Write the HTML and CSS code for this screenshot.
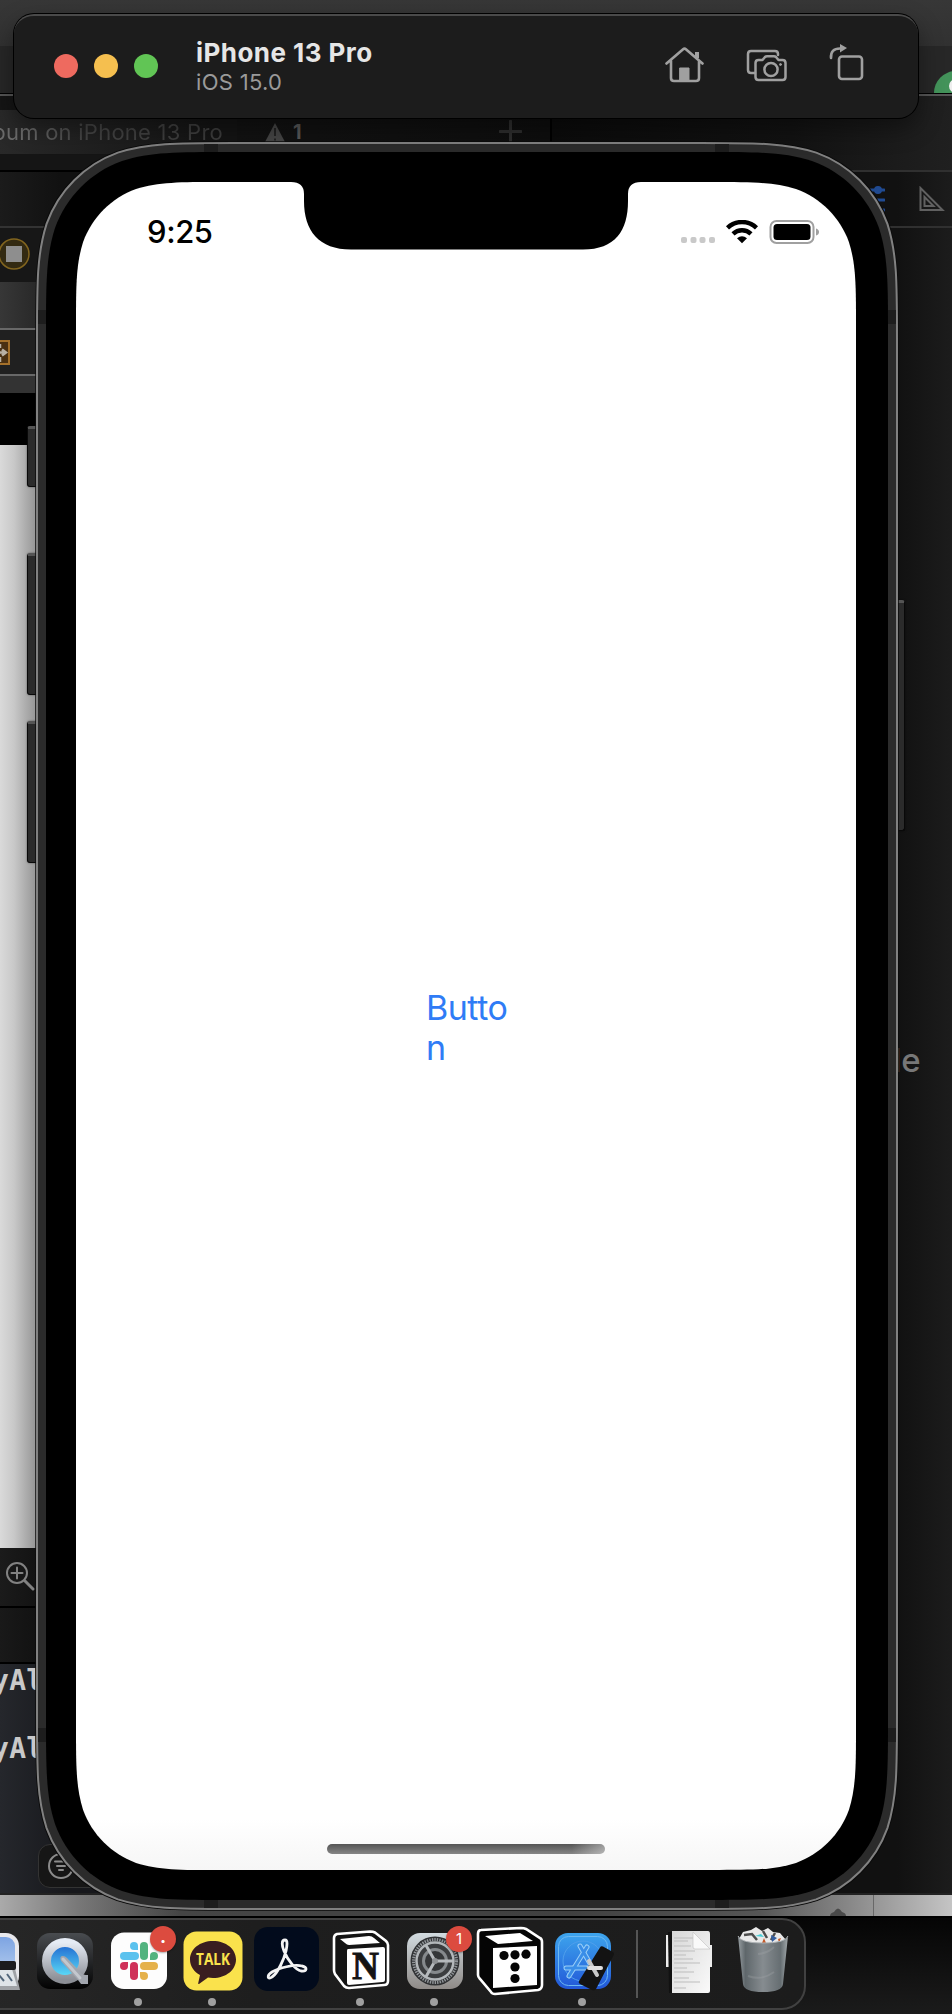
FILE: index.html
```
<!DOCTYPE html>
<html lang="en">
<head>
<meta charset="utf-8">
<title>Simulator</title>
<link rel="stylesheet" href="styles.css">
</head>
<body>
<main class="desktop">
  <section class="ide">
    <div class="browser-bar"></div>
    <div class="browser-tabs">
      <svg class="favicon" width="18" height="23" viewBox="0 0 18 23"><circle cx="22" cy="23" r="22" fill="#43935a"/><circle cx="22" cy="16" r="7" fill="#eee"/></svg>
    </div>
    <div class="ide-body">
      <div class="editor">
        <div class="activity">
          <div class="activity-status"><span>bum on iPhone 13 Pro</span></div>
          <div class="warning">
            <svg width="20" height="19" viewBox="0 0 20 19"><path d="M10 0 20 19H0z" fill="#454545"/><path d="M10 5v8M10 15.500v2" stroke="#222" stroke-width="2"/></svg>
            <b>1</b>
          </div>
          <svg class="plus" width="23" height="23" viewBox="0 0 23 23"><path d="M11.500 1v21M1 11.500h21" stroke="#2e2e2e" stroke-width="3" stroke-linecap="round"/></svg>
        </div>
        <div class="tabs-row"></div>
        <div class="jump-row"></div>
        <div class="stop-row">
          <svg width="36" height="54" viewBox="0 0 36 54"><circle cx="14" cy="26" r="15" fill="#332a12" stroke="#82651f" stroke-width="1.500"/><rect x="6" y="18" width="16" height="16" fill="#8e8e8e"/></svg>
        </div>
        <div class="path-row"></div>
        <div class="layout-row">
          <svg width="36" height="44" viewBox="0 0 36 44"><rect x="-16" y="11" width="25" height="23" fill="#4a3012" stroke="#a4702a" stroke-width="2"/><path d="M-2 22.500H5M2 19.500l4 3-4 3M0 14v4M0 27v5" stroke="#b9b1a5" stroke-width="2.500"/></svg>
        </div>
        <div class="ruler-row"></div>
        <div class="black-row"></div>
        <div class="canvas"></div>
        <div class="zoom-row">
          <svg width="36" height="56" viewBox="0 0 36 56" fill="none" stroke="#828282" stroke-width="2" stroke-linecap="round"><circle cx="17" cy="25" r="10"/><path d="M11.500 25h11M17 19.500v11"/><path d="m25 33 8 8" stroke-width="3"/></svg>
        </div>
        <div class="debug-row"></div>
        <div class="console">
          <div class="log">yAlbum</div>
          <div class="log">yAlbum</div>
          <div class="filter">
            <svg width="26" height="26" viewBox="0 0 26 26" fill="none" stroke="#8b8b8b" stroke-width="2" stroke-linecap="round"><circle cx="13" cy="13" r="12"/><path d="M7 8.500h12M9 13h8M11 17h4"/></svg>
          </div>
        </div>
      </div>
      <aside class="inspector">
        <div class="inspector-top"></div>
        <div class="inspector-tabs">
          <svg width="27" height="26" viewBox="0 0 27 26" stroke="#204a91" stroke-width="3" stroke-linecap="round"><path d="M1 4h25M1 14h25M1 24h25"/><circle cx="20" cy="4" r="3" fill="#204a91" stroke-width="2"/></svg>
          <svg width="26" height="26" viewBox="0 0 26 26" fill="none" stroke="#606060" stroke-width="2"><path d="M1.500 2v22h22z"/><path d="M5.500 11v9h9z"/></svg>
        </div>
        <div class="inspector-body">le</div>
      </aside>
    </div>
    <div class="page-strip">
      <svg width="20" height="8" viewBox="0 0 20 8"><path d="M2 8q0-3 4-4 4-7 8 0 4 1 4 4z" fill="#494949"/></svg>
      <i></i>
    </div>
    <div class="wallpaper"></div>
  </section>

  <nav class="dock">
    <svg class="app" viewBox="0 0 74 92">
      <defs>
        <linearGradient id="sky" x2="0" y2="1"><stop stop-color="#7da4e2"/><stop offset="1" stop-color="#c3d8f2"/></linearGradient>
        <linearGradient id="qtb" x2="0" y2="1"><stop stop-color="#494c50"/><stop offset="1" stop-color="#020202"/></linearGradient>
        <linearGradient id="qtr" x2="0" y2="1"><stop stop-color="#e6ecf5"/><stop offset="1" stop-color="#8c8f96"/></linearGradient>
        <linearGradient id="qti" x2="0" y2="1"><stop stop-color="#1c62ce"/><stop offset="1" stop-color="#62e7fb"/></linearGradient>
        <linearGradient id="set" x2="0" y2="1"><stop stop-color="#d2dbe0"/><stop offset="1" stop-color="#8f8b88"/></linearGradient>
        <linearGradient id="sim" x2="0" y2="1"><stop stop-color="#3da5ed"/><stop offset="1" stop-color="#2257d8"/></linearGradient>
        <linearGradient id="bin"><stop stop-color="#969da1"/><stop offset=".15" stop-color="#5f676b"/><stop offset=".5" stop-color="#868c90"/><stop offset=".85" stop-color="#666e72"/><stop offset="1" stop-color="#a2a8ab"/></linearGradient>
        <linearGradient id="pap" x2="1" y2="1"><stop stop-color="#d7d7d7"/><stop offset="1" stop-color="#fafafa"/></linearGradient>
      </defs>
      <rect x="9" y="15" width="56" height="56" rx="13" fill="#e8e8ec"/><rect x="13" y="19" width="48" height="48" rx="9" fill="url(#sky)"/>
      <path d="M42 46h18l6 26H38z" fill="#9fa2a6"/><path d="M44 51h14l5 17H41z" fill="#dfe4e8"/><rect x="40" y="43" width="22" height="9" rx="2" fill="#1b1b1d"/><path d="M45 57l5 6m3-7 5 7" stroke="#52667a" stroke-width="2"/>
    </svg>
    <svg class="app" viewBox="0 0 74 92"><rect x="9" y="15" width="56" height="56" rx="13" fill="url(#qtb)"/><circle cx="37" cy="43" r="18.500" fill="url(#qti)" stroke="url(#qtr)" stroke-width="9"/><path d="M33 43q-2-5 2-5 2 0 4 2l14 15q2 2 7 2v9h-7l-3-4z" fill="#a2a6ae"/><path d="M35 41 52 60" stroke="#c3c7cd" stroke-width="3" stroke-linecap="round"/></svg>
    <div class="app running">
      <svg viewBox="0 0 74 92"><rect x="9" y="14.500" width="56" height="56.500" rx="13" fill="#fdfdfd"/>
        <g stroke-width="8" stroke-linecap="round"><path d="M22 38h11" stroke="#5bc2ee"/><path d="M42 28v10" stroke="#52b37f"/><path d="M32 48v10" stroke="#cf3159"/><path d="M42 48h10" stroke="#e5b14b"/></g>
        <path d="M36 32h-4a4 4 0 1 1 4-4z" fill="#5bc2ee"/><path d="M48 42v-4a4 4 0 1 1 4 4z" fill="#52b37f"/><path d="M26 44v4a4 4 0 1 1-4-4z" fill="#cf3159"/><path d="M38 54h4a4 4 0 1 1-4 4z" fill="#e5b14b"/>
      </svg>
      <span class="badge badge-dot">•</span>
    </div>
    <div class="app running">
      <svg viewBox="0 0 74 92"><rect x="7.500" y="13.500" width="59" height="59" rx="13" fill="#fae24c"/><path d="M37 23c13 0 23 8 23 18.500S50 60 37 60q-3 0-5-.4L23 66q-1 .4-.8-.7L24 57c-6-3-10-9-10-15.500C14 31 24 23 37 23z" fill="#3a1d20"/><text x="20" y="47" textLength="34" lengthAdjust="spacingAndGlyphs" class="talk">TALK</text></svg>
    </div>
    <svg class="app" viewBox="0 0 74 92"><rect x="4" y="9" width="65" height="64" rx="14" fill="#020b1c"/><path d="M35 22c-4 0-3 6-1 11 4 10 12 19 17 20 6 1 7-4 1-5-8-2-23 2-30 6-6 4-4 8 0 5 6-4 12-18 14-26 1-5 2-11-1-11z" fill="none" stroke="#f4f4f4" stroke-width="2.800"/></svg>
    <div class="app running">
      <svg viewBox="0 0 74 92"><path d="M13 16 46 13.500q3 0 5 1L62 23q2 2 2 4v36q0 4-4 4l-35 3q-3 0-5-2L11 56q-1-2-1-4V20q0-3 3-4z" fill="#141414" stroke="#fff" stroke-width="2.600"/><path d="m16 21 29-3q3 0 5 2l6 5-31 2q-2 0-4-2z" fill="#fff"/><path d="m24 31 35-2q2 0 2 2v31q0 2-2 2l-34 3q-2 0-2-2V33q0-2 1-2z" fill="#fff"/><text x="28" y="60.500" textLength="27" lengthAdjust="spacingAndGlyphs" class="notion">N</text></svg>
    </div>
    <div class="app running">
      <svg viewBox="0 0 74 92"><rect x="9" y="15" width="56" height="56" rx="13" fill="url(#set)"/><circle cx="37" cy="43" r="24.500" fill="#303234"/><circle cx="37" cy="43" r="21.500" fill="none" stroke="#92969a" stroke-width="3" stroke-dasharray="1.400 1.100"/><circle cx="37" cy="43" r="18.500" fill="#3b3d3f" stroke="#b3b7ba" stroke-width="2.500"/><circle cx="37" cy="43" r="11.500" fill="#343638" stroke="#85898c" stroke-width="3"/><path d="M37 43h19M37 43 27.500 26.500M37 43 27.500 59.500" stroke="#b5b9bc" stroke-width="3"/><circle cx="37" cy="43" r="3" fill="#8e9194"/></svg>
      <span class="badge">1</span>
    </div>
    <svg class="app dice" viewBox="0 0 74 92"><path d="M8 12 48 10q3 0 5 1L67 20q2 1 2 4v43q0 4-4 5l-43 4q-3 0-4-2L7 61q-2-2-2-4V16q0-4 3-4z" fill="#050505" stroke="#fff" stroke-width="2.600"/><path d="m12 18 35-3 13 8-35 3z" fill="#fff"/><path d="m20 30 44-2v39l-44 3z" fill="#fff"/><g fill="#050505"><circle cx="31" cy="37.500" r="4.600"/><circle cx="42" cy="36.800" r="4.600"/><circle cx="53" cy="36.200" r="4.600"/><circle cx="42" cy="49" r="4.600"/><circle cx="42" cy="60.500" r="4.600"/></g></svg>
    <div class="app running">
      <svg viewBox="0 0 74 92"><rect x="9" y="15" width="56" height="56" rx="13" fill="url(#sim)"/><rect x="12.500" y="18.500" width="49" height="49" rx="10" fill="none" stroke="#6db9f1"/><circle cx="37" cy="43" r="20" fill="none" stroke="#4f9fec"/><g fill="none" stroke="#9cd0f8" stroke-linecap="round"><path d="m41 29-18 29" stroke-width="5"/><path d="m34 28 16 28" stroke-width="5"/><path d="M20 50h34" stroke-width="5"/></g><g fill="none" stroke="#3a8ee8" stroke-width="3" stroke-linecap="round"><path d="m41 29-18 29M34 28l16 28M20 50h20"/></g><path d="M54 29.500q1-2 3-1l9 5q3 1 1.500 4L50 71q-1 2-4 1l-12-6q-2-1-1-3z" fill="#131313"/><path d="m43 43 8 14" stroke="#c8c8c8" stroke-width="4" stroke-linecap="round"/><path d="M43 50h12" stroke="#e0e0e0" stroke-width="4" stroke-linecap="round"/></svg>
    </div>
    <i class="divider"></i>
    <svg class="app" viewBox="0 0 74 92"><path d="M14 17h8v32h-8zM54 27h6v22h-6z" fill="#ededed"/><path d="M16 14h8v61h-7z" fill="#111"/><path d="M20 13h36q2 0 2 3v57q0 2-2 2H20z" fill="url(#pap)"/><path d="M22 20h20M22 23h14M22 28h17M22 33h21M22 37h12M22 41h19M22 45h26M22 50h13M22 54h20M22 60h15M22 64h26M22 70h12" stroke="#bdbdbd"/><path d="M41 14 58 31H43q-2 0-2-2z" fill="#f9f9f9" stroke="#c6c6c6" stroke-width=".7"/></svg>
    <svg class="app" viewBox="0 0 74 92"><path d="m13 21 4-7 8-2 5-3 6 4 6-3 5 4 7 1 6 7-22 8z" fill="#e9e9e9"/><path d="m18 17 8-1 5 6m6-9 4 7m8-5-4 7" fill="none" stroke="#4d4d4d" stroke-width="2.500"/><path d="m29 18 6-2 3 3z" fill="#48cdd6"/><path d="m45 17 6 3-5 4z" fill="#345e9f"/><path d="m38 20 2 5h-4zM52 21l3-1-2 5z" fill="#c55a29"/><path d="M12 18q2 7 25 7t25-7l-5 48q-1 8-20 8t-20-8z" fill="url(#bin)"/><path d="M12 18q2 7 25 7t25-7" fill="none" stroke="#adb2b5" stroke-width="1"/><path d="M32 36q10-1 16-7M22 58q14 5 26-4" fill="none" stroke="#a4a9ac" stroke-width="2" opacity=".3"/></svg>
  </nav>

  <section class="phone">
    <i class="key key-mute"></i><i class="key key-up"></i><i class="key key-down"></i><i class="key key-power"></i>
    <svg class="shell" viewBox="0 0 862 1768">
      <defs><linearGradient id="page" x2="0" y2="1"><stop offset=".97" stop-color="#fff"/><stop offset="1" stop-color="#f6f6f6"/></linearGradient></defs>
      <path fill="#2b2b2b" stroke="#0b0b0b" stroke-width="1.500" d="M0 196C0 139 0 111 9.600 81C21.600 47.700 47.700 21.600 81 9.600C111 0 139 0 196 0H666C723 0 751 0 781 9.600C814.300 21.600 840.400 47.700 852.400 81C862 111 862 139 862 196V1572C862 1629 862 1657 852.400 1687C840.400 1720.300 814.300 1746.400 781 1758.400C751 1768 723 1768 666 1768H196C139 1768 111 1768 81 1758.400C47.700 1746.400 21.600 1720.300 9.600 1687C0 1657 0 1629 0 1572Z"/>
      <path fill="none" stroke="#818181" stroke-width="2" transform="translate(1 1) scale(.99768 .99887)" d="M0 196C0 139 0 111 9.600 81C21.600 47.700 47.700 21.600 81 9.600C111 0 139 0 196 0H666C723 0 751 0 781 9.600C814.300 21.600 840.400 47.700 852.400 81C862 111 862 139 862 196V1572C862 1629 862 1657 852.400 1687C840.400 1720.300 814.300 1746.400 781 1758.400C751 1768 723 1768 666 1768H196C139 1768 111 1768 81 1758.400C47.700 1746.400 21.600 1720.300 9.600 1687C0 1657 0 1629 0 1572Z"/>
      <path fill="#1d1d1d" d="M168 2h14v8h-14zM679 2h14v8h-14zM168 1758h14v8h-14zM679 1758h14v8h-14zM2 168h8v14H2zM852 168h8v14h-8zM2 1586h8v14H2zM852 1586h8v14h-8z"/>
      <path fill="#000" transform="translate(10 10)" d="M0 183C0 131 0 104 9 76C20 45 45 20 76 9C104 0 131 0 183 0H659C711 0 738 0 766 9C797 20 822 45 833 76C842 104 842 131 842 183V1565C842 1617 842 1644 833 1672C822 1703 797 1728 766 1739C738 1748 711 1748 659 1748H183C131 1748 104 1748 76 1739C45 1728 20 1703 9 1672C0 1644 0 1617 0 1565Z"/>
      <path fill="url(#page)" transform="translate(40 40)" d="M0 145C0 103.400 0 82.500 7.100 60C16.100 35.400 35.400 16.100 60 7.100C82.500 0 103.400 0 145 0H635C676.600 0 697.500 0 720 7.100C744.600 16.100 763.900 35.400 772.900 60C780 82.500 780 103.400 780 145V1543C780 1584.600 780 1605.500 772.900 1628C763.900 1652.600 744.600 1671.900 720 1680.900C697.500 1688 676.600 1688 635 1688H145C103.400 1688 82.500 1688 60 1680.900C35.400 1671.900 16.100 1652.600 7.100 1628C0 1605.500 0 1584.600 0 1543Z"/>
      <path fill="#000" transform="translate(40 40)" d="M215 0Q228 0 228 12V19C228 49 243 67.500 275 67.500H507C539 67.500 552 49 552 19V12Q552 0 565 0V-2H215Z"/>
    </svg>
    <div class="screen">
      <header class="status">
        <time>9:25</time>
        <svg width="144" height="26" viewBox="0 0 144 26"><g fill="#c9c9c9"><rect x="2" y="17" width="6" height="6" rx="2"/><rect x="11.500" y="17" width="6" height="6" rx="2"/><rect x="20.500" y="17" width="6" height="6" rx="2"/><rect x="30" y="17" width="6" height="6" rx="2"/></g>
          <g fill="none" stroke="#000" stroke-width="4.400"><path d="M48.500 7.800a21 21 0 0 1 29 0"/><path d="M54 13.800a13 13 0 0 1 18 0"/></g><path d="m58 18.300q5-4 10 0L63 23.300z"/>
          <rect x="91.500" y="1" width="43" height="22" rx="6" fill="none" stroke="#a0a0a0" stroke-width="2"/><rect x="94.500" y="4" width="37" height="16" rx="3.500"/><path d="M137 8.500q3 1 3 3.500t-3 3.500z" fill="#a0a0a0"/></svg>
      </header>
      <button class="app-button">Butto<br>n</button>
      <i class="home-bar"></i>
    </div>
  </section>

  <header class="sim-bar">
    <div class="lights"><i class="red"></i><i class="amber"></i><i class="green"></i></div>
    <div class="device"><h1>iPhone 13 Pro</h1><p>iOS 15.0</p></div>
    <div class="tools">
      <svg width="40" height="40" viewBox="0 0 40 40" fill="none" stroke="#a0a0a0" stroke-width="2.600" stroke-linecap="round" stroke-linejoin="round"><path d="m1.500 19.500 16.600-14.300q1.400-1.200 2.800 0L37.500 19.500M6 17v17q0 3 3 3h22q3 0 3-3V17"/><path d="M32 14V8" stroke-width="4" stroke-linecap="butt"/><path d="M15 24h9v12h-9z" fill="#a0a0a0" stroke-width="1"/></svg>
      <svg width="42" height="40" viewBox="0 0 42 40" fill="none" stroke="#a0a0a0" stroke-width="2.500" stroke-linecap="round" stroke-linejoin="round"><path d="M9 29H5q-3 0-3-3V10q0-3 3-3h24q3 0 3 3v1"/><path d="M12.500 16h4l2.500-3q.8-.8 2-.8h7q1.200 0 2 .8l2.500 3h4q3 0 3 3v14q0 3-3 3h-24q-3 0-3-3V19q0-3 3-3z"/><circle cx="25" cy="25.500" r="6.600"/><circle cx="34.500" cy="20.500" r="1" fill="#a0a0a0" stroke-width="1"/></svg>
      <svg width="36" height="40" viewBox="0 0 36 40" fill="none" stroke="#a0a0a0" stroke-width="2.600" stroke-linecap="round"><rect x="11" y="12.500" width="23" height="22.500" rx="3"/><path d="M3 14q-.6-9.500 9-9.500"/><path d="m12 0 7 4-7 4.500z" fill="#a0a0a0" stroke="none"/></svg>
    </div>
  </header>
</main>
</body>
</html>
```
FILE: styles.css
```
* { box-sizing: border-box; }
body { margin: 0; background: #111; font-family: Inter, "Liberation Sans", sans-serif; }
h1, p { margin: 0; }
svg { display: block; }
.desktop { position: relative; width: 952px; height: 2014px; overflow: hidden; }

/* Windows behind the simulator */
.ide { height: 2014px; display: flex; flex-direction: column; }
.browser-bar { flex: none; height: 46px; background: linear-gradient(#373737, #313131); }
.browser-tabs { flex: none; height: 50px; background: #272727; border-bottom: 2px solid #555; box-shadow: inset 0 -1px #000; display: flex; justify-content: flex-end; align-items: flex-end; padding-bottom: 1px; }
.ide-body { flex: none; height: 1799px; display: flex; border-bottom: 2px solid #222; }
.editor { width: 552px; flex: none; display: flex; flex-direction: column; border-right: 2px solid #000; }
.activity { height: 58px; flex: none; display: flex; align-items: flex-end; background: linear-gradient(90deg, #151515, #0e0e0e); }
.activity-status { width: 237px; height: 44px; background: linear-gradient(90deg, #292929, #141414 90%); font-size: 22px; line-height: 44px; white-space: nowrap; display: flex; justify-content: flex-end; padding-right: 14px; letter-spacing: .25px; }
.activity-status span { background: linear-gradient(90deg, #6a6a6a 15%, #444 40%, #3c3c3c); background-clip: text; color: transparent; }
.warning { display: flex; align-items: center; gap: 8px; height: 44px; margin-left: 28px; color: #575757; font-size: 20px; }
.plus { margin: 0 0 11px 197px; }
.tabs-row { height: 18px; flex: none; background: #151515; border-bottom: 2px solid #000; }
.jump-row { height: 56px; flex: none; background: linear-gradient(90deg, #1b1b1b, #111 60px); border-bottom: 2px solid #333; }
.stop-row { height: 54px; flex: none; background: #171717; }
.path-row { height: 48px; flex: none; background: linear-gradient(90deg, #373737, #292929 36px); border-bottom: 2px solid #686868; }
.layout-row { height: 46px; flex: none; background: #202020; border-bottom: 2px solid #686868; }
.ruler-row { height: 17px; flex: none; background: #333; }
.black-row { height: 52px; flex: none; background: #000; }
.canvas { height: 1103px; flex: none; background: linear-gradient(90deg, #dadada, #c8c8c8 14px, #9a9a9a 34px); }
.zoom-row { height: 60px; flex: none; background: linear-gradient(90deg, #1b1b1b, #131313 36px); border-bottom: 2px solid #000; }
.debug-row { height: 56px; flex: none; background: linear-gradient(90deg, #191919, #121212 36px); border-bottom: 2px solid #000; }
.console { flex: 1; background: linear-gradient(90deg, #25272c, #17181c 70px); padding-left: 38px; }
.log { font: bold 28px/68px "DejaVu Sans Mono", monospace; color: #c9c9c9; margin: -17px 0 17px -46px; letter-spacing: .3px; }
.log + .log { margin-top: -17px; }
.filter { width: 110px; height: 44px; margin-top: 61px; border: 1px solid #333; border-radius: 12px; background: #161616; padding: 8px 9px; }
.inspector { flex: 1; display: flex; flex-direction: column; background: linear-gradient(90deg, #111 345px, #1c1c1c); }
.inspector-top { height: 76px; border-bottom: 2px solid #303030; background: linear-gradient(90deg, #0b0b0b, #121212 240px, #202020); }
.inspector-tabs { height: 56px; border-bottom: 2px solid #303030; display: flex; align-items: center; justify-content: flex-end; gap: 34px; padding: 0 7px 0 0; }
.inspector-body { padding: 812px 0 0 341px; font-size: 33px; font-weight: 500; line-height: 40px; color: #777; }
.page-strip { flex: none; height: 21px; background: linear-gradient(90deg, #aaa, #777 80px, #454545 180px, #404040 570px, #565656 760px, #888 850px, #c4c4c4); display: flex; justify-content: flex-end; align-items: flex-end; }
.page-strip i { width: 1px; height: 21px; background: #686868; margin: 0 78px 0 25px; }
.wallpaper { flex: 1; background: linear-gradient(#050505, #1b1b1b); border-top: 2px solid #000; }

/* Dock */
.dock { position: absolute; left: -48px; top: 1918px; width: 854px; height: 92px; border: 2px solid #414141; border-radius: 24px; background: linear-gradient(90deg, #282828, #1e1e1e 300px, #1c1c1c); display: flex; align-items: center; }
.app { position: relative; width: 74px; height: 92px; flex: none; }
.app svg { width: 74px; height: 92px; }
.dice { left: 1px; }
.running::after { content: ""; position: absolute; left: 32px; top: 80px; width: 8px; height: 8px; border-radius: 50%; background: #a0a0a0; }
.badge { position: absolute; left: 48px; top: 8px; width: 26px; height: 26px; border-radius: 50%; background: #dc4b3f; color: #fff; font-size: 15px; line-height: 26px; text-align: center; box-shadow: 0 1px 2px #0005; }
.badge-dot { font-size: 10px; line-height: 28px; }
.divider { width: 2px; height: 68px; margin: 0 14px 0 16px; background: #555; }
.talk { font: 700 15.500px "Open Sans", sans-serif; fill: #fae24c; }
.notion { font: bold 41px "Liberation Serif", serif; fill: #141414; stroke: #141414; stroke-width: .8px; }

/* Device */
.phone { position: absolute; left: 36px; top: 142px; width: 862px; height: 1768px; }
.shell { position: relative; width: 862px; height: 1768px; overflow: visible; }
.key { position: absolute; left: -9px; width: 12px; background: #2b2b2b; border: 1px solid #090909; border-top: 3px solid #555; border-radius: 3px 0 0 3px; box-shadow: 0 0 2px #0008; }
.key-mute { top: 284px; height: 61px; }
.key-up { top: 411px; height: 142px; }
.key-down { top: 579px; height: 142px; }
.key-power { top: 458px; left: 857px; height: 231px; width: 12px; border-radius: 0 3px 3px 0; }
.screen { position: absolute; left: 40px; top: 40px; width: 780px; height: 1688px; display: flex; flex-direction: column; align-items: center; }
.status { width: 780px; height: 66px; padding: 34px 33px 0 71px; display: flex; justify-content: space-between; align-items: flex-start; }
.status time { font-size: 31px; font-weight: 550; line-height: 32px; letter-spacing: -.4px; }
.status svg { margin-top: 3.500px; }
.app-button { width: 84px; margin: 740px 0 0 4px; padding: 0; border: 0; background: none; font: 400 34px/40px Inter, sans-serif; color: #2f7cf6; text-align: left; letter-spacing: -.5px; }
.home-bar { width: 278px; height: 10px; border-radius: 5px; margin-top: auto; margin-bottom: 16px; background: linear-gradient(90deg, #fff0 88%, #fff6), linear-gradient(#555, #858585); }

/* Simulator title bar */
.sim-bar { position: absolute; left: 14px; top: 14px; width: 904px; height: 104px; border-radius: 20px; background: #1c1c1c; border-top: 2px solid #4a4a4a; box-shadow: 0 0 0 1px #000, 0 10px 24px #0006; display: flex; align-items: center; padding: 0 54px 0 40px; }
.lights { display: flex; gap: 16px; margin-top: -2px; }
.lights i { width: 24px; height: 24px; border-radius: 50%; }
.red { background: #ee6a5f; }
.amber { background: #f5bf4f; }
.green { background: #61c555; }
.device { margin: -2px 0 0 38px; }
.device h1 { font-size: 26px; line-height: 31px; font-weight: 700; color: #e6e6e6; letter-spacing: .45px; }
.device p { font-size: 22px; line-height: 28px; color: #9a9a9a; letter-spacing: .3px; }
.tools { margin: -6px 0 0 auto; display: flex; align-items: center; }
.tools svg + svg { margin-left: 41px; }
.tools svg:last-child { margin-left: 40px; }
```
